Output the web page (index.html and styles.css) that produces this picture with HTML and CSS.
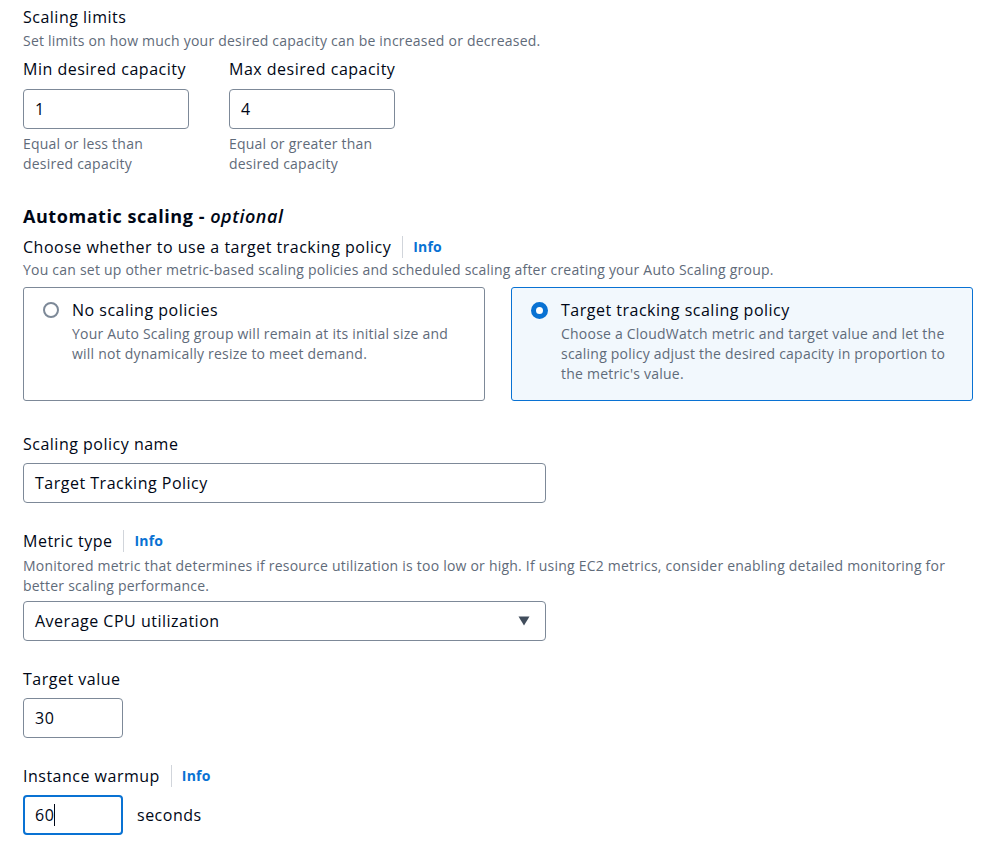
FILE: index.html
```html
<!DOCTYPE html>
<html lang="en">
<head>
    <meta charset="UTF-8">
    <meta name="viewport" content="width=device-width, initial-scale=1.0">
    <title>Auto Scaling group - group size and scaling</title>
    <link rel="stylesheet" href="styles.css">
</head>
<body>
    <main class="page">
        <!-- Scaling limits -->
        <section class="limits">
            <div class="group-title">Scaling limits</div>
            <p class="desc">Set limits on how much your desired capacity can be increased or decreased.</p>
            <div class="limit-row">
                <div class="limit-col">
                    <div class="label">Min desired capacity</div>
                    <div class="input input-limit">1</div>
                    <p class="hint">Equal or less than desired capacity</p>
                </div>
                <div class="limit-col">
                    <div class="label">Max desired capacity</div>
                    <div class="input input-limit">4</div>
                    <p class="hint">Equal or greater than desired capacity</p>
                </div>
            </div>
        </section>

        <!-- Automatic scaling -->
        <section class="auto">
            <h2 class="heading">Automatic scaling - <i>optional</i></h2>
            <div class="label">Choose whether to use a target tracking policy <span class="sep"></span><a class="info" href="#">Info</a></div>
            <p class="desc">You can set up other metric-based scaling policies and scheduled scaling after creating your Auto Scaling group.</p>

            <div class="tiles">
                <div class="tile">
                    <span class="radio"></span>
                    <div class="tile-body">
                        <div class="tile-title">No scaling policies</div>
                        <p class="tile-desc">Your Auto Scaling group will remain at its initial size and will not dynamically resize to meet demand.</p>
                    </div>
                </div>
                <div class="tile selected">
                    <span class="radio checked"></span>
                    <div class="tile-body">
                        <div class="tile-title">Target tracking scaling policy</div>
                        <p class="tile-desc">Choose a CloudWatch metric and target value and let the scaling policy adjust the desired capacity in proportion to the metric's value.</p>
                    </div>
                </div>
            </div>

            <div class="field">
                <div class="label">Scaling policy name</div>
                <div class="input input-wide">Target Tracking Policy</div>
            </div>

            <div class="field">
                <div class="label">Metric type <span class="sep"></span><a class="info" href="#">Info</a></div>
                <p class="desc desc-field">Monitored metric that determines if resource utilization is too low or high. If using EC2 metrics, consider enabling detailed monitoring for better scaling performance.</p>
                <div class="input input-wide select">
                    <span>Average CPU utilization</span>
                    <svg class="caret-down" width="12" height="10" viewBox="0 0 12 10"><path d="M0.5 0.5h11L6 9.5z" fill="#414d5c"/></svg>
                </div>
            </div>

            <div class="field">
                <div class="label">Target value</div>
                <div class="input input-small">30</div>
            </div>

            <div class="field">
                <div class="label">Instance warmup <span class="sep"></span><a class="info" href="#">Info</a></div>
                <div class="warmup-row">
                    <div class="input input-small focused">60<span class="cursor"></span></div>
                    <span class="unit">seconds</span>
                </div>
            </div>
        </section>
    </main>
</body>
</html>
```

FILE: styles.css
```css
/* Base */
body {
    margin: 0;
    padding: 0;
    font-family: "Open Sans", "Noto Sans", Arial, sans-serif;
    color: #000716;
    background-color: #ffffff;
}

p {
    margin: 0;
}

.page {
    width: 960px;
    padding: 5px 0 0 23px;
}

/* Text styles */
.group-title {
    font-size: 16px;
    line-height: 24px;
    letter-spacing: 0.5px;
}

.desc {
    font-size: 14px;
    line-height: 20px;
    letter-spacing: 0.22px;
    color: #5f6b7a;
    margin-top: 2px;
}

.label {
    display: flex;
    align-items: center;
    font-size: 16px;
    line-height: 24px;
    letter-spacing: 0.5px;
    white-space: nowrap;
}

.sep {
    display: inline-block;
    width: 1px;
    height: 22px;
    background-color: #d1d5db;
    margin: 0 10px 0 11px;
}

.info {
    font-size: 14px;
    font-weight: bold;
    letter-spacing: 0.2px;
    color: #0972d3;
    text-decoration: none;
}

/* Inputs */
.input {
    box-sizing: border-box;
    height: 40px;
    border: 1px solid #7d8998;
    border-radius: 4px;
    padding: 0 11px;
    font-size: 16px;
    line-height: 38px;
    letter-spacing: 0.5px;
    display: flex;
    align-items: center;
}

.input-limit {
    width: 166px;
}

.input-wide {
    width: 523px;
}

.input-small {
    width: 100px;
}

.select {
    justify-content: space-between;
    padding-right: 15px;
}

.focused {
    border: 2px solid #0972d3;
    padding-left: 10px;
}

.cursor {
    display: inline-block;
    width: 1px;
    height: 22px;
    background-color: #000716;
}

/* Scaling limits */
.limits .label {
    margin-top: 6px;
    margin-bottom: 8px;
}

.limit-row {
    display: flex;
    gap: 40px;
}

.limit-col {
    width: 166px;
}

.hint {
    font-size: 14px;
    line-height: 20px;
    letter-spacing: 0.22px;
    color: #5f6b7a;
    margin-top: 5px;
}

/* Automatic scaling */
.heading {
    margin: 29px 0 6px;
    font-size: 18px;
    line-height: 26px;
    letter-spacing: 0.55px;
    font-weight: bold;
}

.heading i {
    font-weight: 600;
}

.auto > .desc {
    margin-top: 1px;
}

.tiles {
    display: grid;
    grid-template-columns: 1fr 1fr;
    gap: 26px;
    width: 950px;
    margin-top: 7px;
}

.tile {
    display: flex;
    gap: 13px;
    height: 114px;
    box-sizing: border-box;
    border: 1px solid #7d8998;
    border-radius: 3px;
    padding: 10px 19px 0;
}

.tile.selected {
    border-color: #0972d3;
    background-color: #f2f8fd;
}

.radio {
    flex: none;
    box-sizing: border-box;
    width: 16px;
    height: 16px;
    margin-top: 4px;
    border: 2px solid #7d8998;
    border-radius: 50%;
    background-color: #ffffff;
}

.radio.checked {
    width: 17px;
    height: 17px;
    border: 5px solid #0972d3;
}

.tile-title {
    font-size: 16px;
    line-height: 24px;
    letter-spacing: 0.5px;
}

.tile-desc {
    font-size: 14px;
    line-height: 20px;
    letter-spacing: 0.22px;
    color: #5f6b7a;
    margin-top: 2px;
}

.field {
    margin-top: 26px;
}

.field > .label {
    margin-bottom: 7px;
}

.auto .tiles + .field {
    margin-top: 31px;
}

.desc-field {
    margin-top: -6px;
    margin-bottom: 5px;
    padding-top: 2px;
}

.warmup-row {
    display: flex;
    align-items: center;
    gap: 14px;
}

.unit {
    font-size: 16px;
    letter-spacing: 0.5px;
}
```
